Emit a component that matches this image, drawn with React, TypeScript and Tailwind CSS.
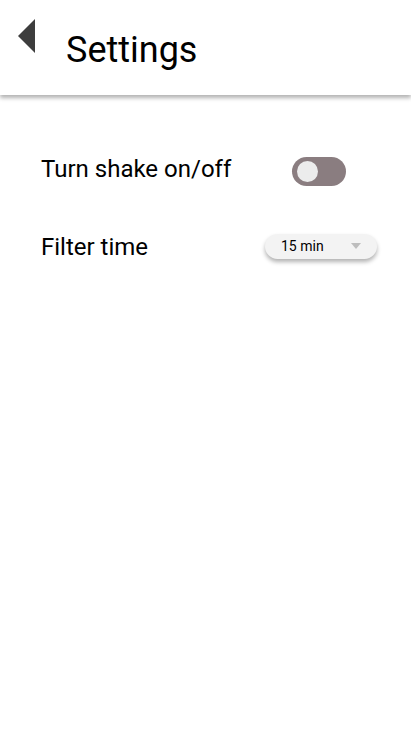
export default function App() {
  return (
    <div className="h-[731px] w-[411px] bg-white font-['Roboto',sans-serif] text-black">
      {/* Header */}
      <header className="relative z-10 flex h-[95px] items-start bg-white pl-[18px] pt-[19px] shadow-[0_3px_4px_rgba(0,0,0,0.3)]">
        <svg width="17" height="34" viewBox="0 0 17 34">
          <polygon points="17,0 17,34 0,17" fill="#3d3d3d" />
        </svg>
        <h1 className="ml-[31px] mt-[11px] text-[36px] leading-[40px] font-normal">Settings</h1>
      </header>

      {/* Content */}
      <div className="flex flex-col gap-[47px] pl-[41px] pr-[34px] pt-[61px]">
        <div className="flex h-[30px] items-center justify-between">
          <span className="mb-[5px] text-[24px] leading-[28px]">Turn shake on/off</span>
          <button className="mr-[31px] flex h-[29px] w-[54px] items-center rounded-full bg-[#8a7d80] pl-[5px]">
            <span className="h-[21px] w-[21px] rounded-full bg-[#ececec]" />
          </button>
        </div>
        <div className="flex h-[30px] items-center justify-between">
          <span className="mb-[3px] text-[24px] leading-[28px]">Filter time</span>
          <button className="mb-[4px] flex h-[25px] w-[112px] items-center justify-between rounded-full bg-[#f3f3f3] pl-[16px] pr-[16px] shadow-[0_3px_4px_rgba(0,0,0,0.3)]">
            <span className="text-[14px] leading-[18px]">15 min</span>
            <svg width="10" height="6" viewBox="0 0 10 6">
              <polygon points="0,0 10,0 5,6" fill="#bdbdbd" />
            </svg>
          </button>
        </div>
      </div>
    </div>
  );
}
